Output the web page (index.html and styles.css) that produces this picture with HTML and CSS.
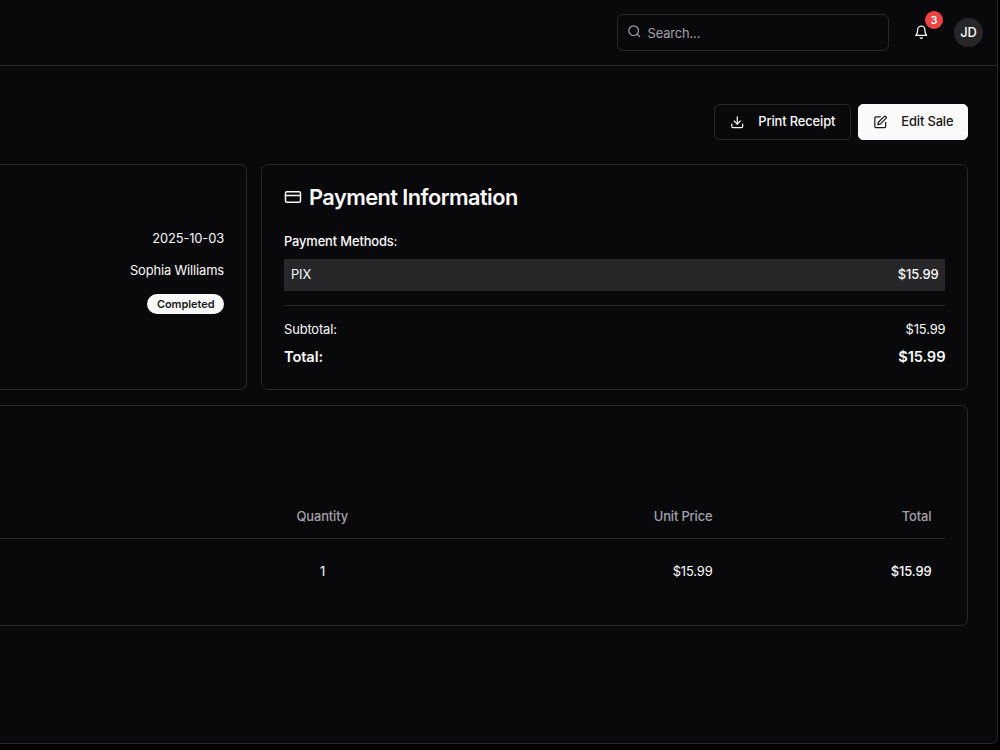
FILE: index.html
```html
<!DOCTYPE html>
<html lang="en">
<head>
  <meta charset="UTF-8" />
  <meta name="viewport" content="width=device-width, initial-scale=1.0"/>
  <title>Sale Details</title>
  <link rel="stylesheet" href="styles.css">
</head>
<body>
  <div class="app">
    <header class="topbar">
      <label class="search">
        <svg class="icon" viewBox="0 0 24 24"><circle cx="11" cy="11" r="8"/><path d="m21 21-4.3-4.3"/></svg>
        <input type="text" placeholder="Search..." />
      </label>
      <button class="bell">
        <svg class="icon" viewBox="0 0 24 24"><path d="M6 8a6 6 0 0 1 12 0c0 7 3 9 3 9H3s3-2 3-9"/><path d="M10.3 21a1.94 1.94 0 0 0 3.4 0"/></svg>
        <span class="count">3</span>
      </button>
      <div class="avatar">JD</div>
    </header>

    <main class="content">
      <div class="actions">
        <button class="btn">
          <svg class="icon" viewBox="0 0 24 24"><path d="M21 15v4a2 2 0 0 1-2 2H5a2 2 0 0 1-2-2v-4"/><path d="m7 10 5 5 5-5"/><path d="M12 15V3"/></svg>
          Print Receipt
        </button>
        <button class="btn btn-primary">
          <svg class="icon" viewBox="0 0 24 24"><path d="M12 3H5a2 2 0 0 0-2 2v14a2 2 0 0 0 2 2h14a2 2 0 0 0 2-2v-7"/><path d="M18.375 2.625a1 1 0 0 1 3 3l-9.013 9.014a2 2 0 0 1-.853.505l-2.873.84a.5.5 0 0 1-.62-.62l.84-2.873a2 2 0 0 1 .506-.852z"/></svg>
          Edit Sale
        </button>
      </div>

      <div class="cards">
        <section class="card sale">
          <span>2025-10-03</span>
          <span>Sophia Williams</span>
          <span class="status">Completed</span>
        </section>

        <section class="card payment">
          <h2>
            <svg class="icon" viewBox="0 0 24 24"><rect x="2" y="5" width="20" height="14" rx="2"/><path d="M2 10h20"/></svg>
            Payment Information
          </h2>
          <p class="label">Payment Methods:</p>
          <div class="row method"><span>PIX</span><strong>$15.99</strong></div>
          <hr>
          <div class="row"><span>Subtotal:</span><span>$15.99</span></div>
          <div class="row total"><span>Total:</span><span>$15.99</span></div>
        </section>
      </div>

      <section class="card items">
        <table>
          <thead>
            <tr><th class="qty">Quantity</th><th class="price">Unit Price</th><th>Total</th></tr>
          </thead>
          <tbody>
            <tr><td class="qty">1</td><td class="price">$15.99</td><td class="sum">$15.99</td></tr>
          </tbody>
        </table>
      </section>
    </main>
  </div>
</body>
</html>
```
FILE: styles.css
```css
* {
  box-sizing: border-box;
}
body {
  margin: 0;
  height: 750px;
  overflow: hidden;
  background: #000;
  color: #fafafa;
  font-family: Inter, sans-serif;
  font-size: 12.9px;
  line-height: 18px;
  letter-spacing: -0.01em;
}
.app {
  width: 998px;
  height: 744px;
  background: #09090b;
  border: 1px solid #27272a;
  border-width: 0 1px 1px 0;
  border-radius: 0 0 7px 0;
}
.icon {
  width: 14.5px;
  height: 14.5px;
  flex: none;
  fill: none;
  stroke: currentColor;
  stroke-width: 2;
  stroke-linecap: round;
  stroke-linejoin: round;
}
button, input {
  font: inherit;
  letter-spacing: inherit;
  color: inherit;
  background: none;
  border: none;
  padding: 0;
}
.topbar {
  display: flex;
  align-items: center;
  justify-content: flex-end;
  height: 66px;
  padding-right: 14px;
  border-bottom: 1px solid #27272a;
}
.search {
  display: flex;
  align-items: center;
  gap: 6.5px;
  width: 272px;
  height: 37px;
  padding: 0 8.5px;
  border: 1px solid #27272a;
  border-radius: 6px;
  color: #a1a1aa;
}
.search .icon {
  margin-bottom: 3px;
}
.search input {
  flex: 1;
  min-width: 0;
  padding-top: 2px;
  outline: none;
}
.search input::placeholder {
  color: #a1a1aa;
}
.bell {
  position: relative;
  display: flex;
  align-items: center;
  justify-content: center;
  width: 36px;
  height: 36px;
  margin: 0 15px 0 14px;
}
.count {
  position: absolute;
  top: -4px;
  right: -4px;
  width: 18px;
  height: 18px;
  border-radius: 50%;
  background: #ef4444;
  font-size: 11px;
  font-weight: 600;
  text-align: center;
}
.avatar {
  width: 29px;
  height: 29px;
  border-radius: 50%;
  background: #27272a;
  font-weight: 500;
  line-height: 29px;
  text-align: center;
}
.content {
  padding: 38px 28.6px 0 0;
}
.actions {
  display: flex;
  justify-content: flex-end;
  gap: 7px;
  margin-bottom: 23.5px;
}
.btn {
  display: flex;
  align-items: center;
  gap: 14px;
  height: 36px;
  padding: 0 14.5px;
  border: 1px solid #27272a;
  border-radius: 5px;
  font-weight: 500;
}
.btn-primary {
  padding: 0 14px;
  background: #fafafa;
  border-color: #fafafa;
  color: #18181b;
}
.card {
  border: 1px solid #27272a;
  border-radius: 7px;
}
.cards {
  display: flex;
  gap: 14px;
  margin-bottom: 15px;
}
.sale {
  display: flex;
  flex-direction: column;
  align-items: flex-end;
  gap: 14px;
  width: 247px;
  padding: 65.5px 22px 0 0;
  border-left: none;
  border-radius: 0 7px 7px 0;
}
.status {
  height: 20px;
  padding: 0 9.5px;
  border-radius: 10px;
  background: #fafafa;
  color: #18181b;
  font-size: 11px;
  font-weight: 600;
  line-height: 20px;
  letter-spacing: -0.005em;
}
.payment {
  flex: 1;
  height: 226px;
  padding: 21px 22px 0;
}
.payment h2 {
  display: flex;
  align-items: center;
  gap: 7px;
  margin: 0 0 25px;
  font-size: 21.75px;
  font-weight: 600;
  line-height: 22px;
  letter-spacing: -0.025em;
}
.payment h2 .icon {
  width: 18px;
  height: 18px;
}
.label {
  margin: 0 0 8px;
  font-weight: 500;
}
.row {
  display: flex;
  justify-content: space-between;
}
.row strong {
  font-weight: 500;
}
.method {
  padding: 7px;
  background: #27272a;
}
.payment hr {
  height: 1px;
  margin: 14.5px 0 15px;
  border: none;
  background: #27272a;
}
.total {
  margin-top: 8.5px;
  font-size: 14.7px;
  font-weight: 600;
}
.items {
  height: 221px;
  padding: 88.5px 22px 0 0;
  border-left: none;
  border-radius: 0 7px 7px 0;
}
table {
  width: 100%;
  table-layout: fixed;
  border-collapse: collapse;
}
th, td {
  padding: 1.5px 14px 0;
  text-align: right;
}
th {
  height: 44px;
  color: #a1a1aa;
  font-weight: 500;
  border-bottom: 1px solid #27272a;
}
td {
  height: 65px;
}
.qty {
  width: 362px;
}
.price {
  width: 364.5px;
}
td.qty {
  padding-right: 37px;
}
.sum {
  font-weight: 500;
}
```
